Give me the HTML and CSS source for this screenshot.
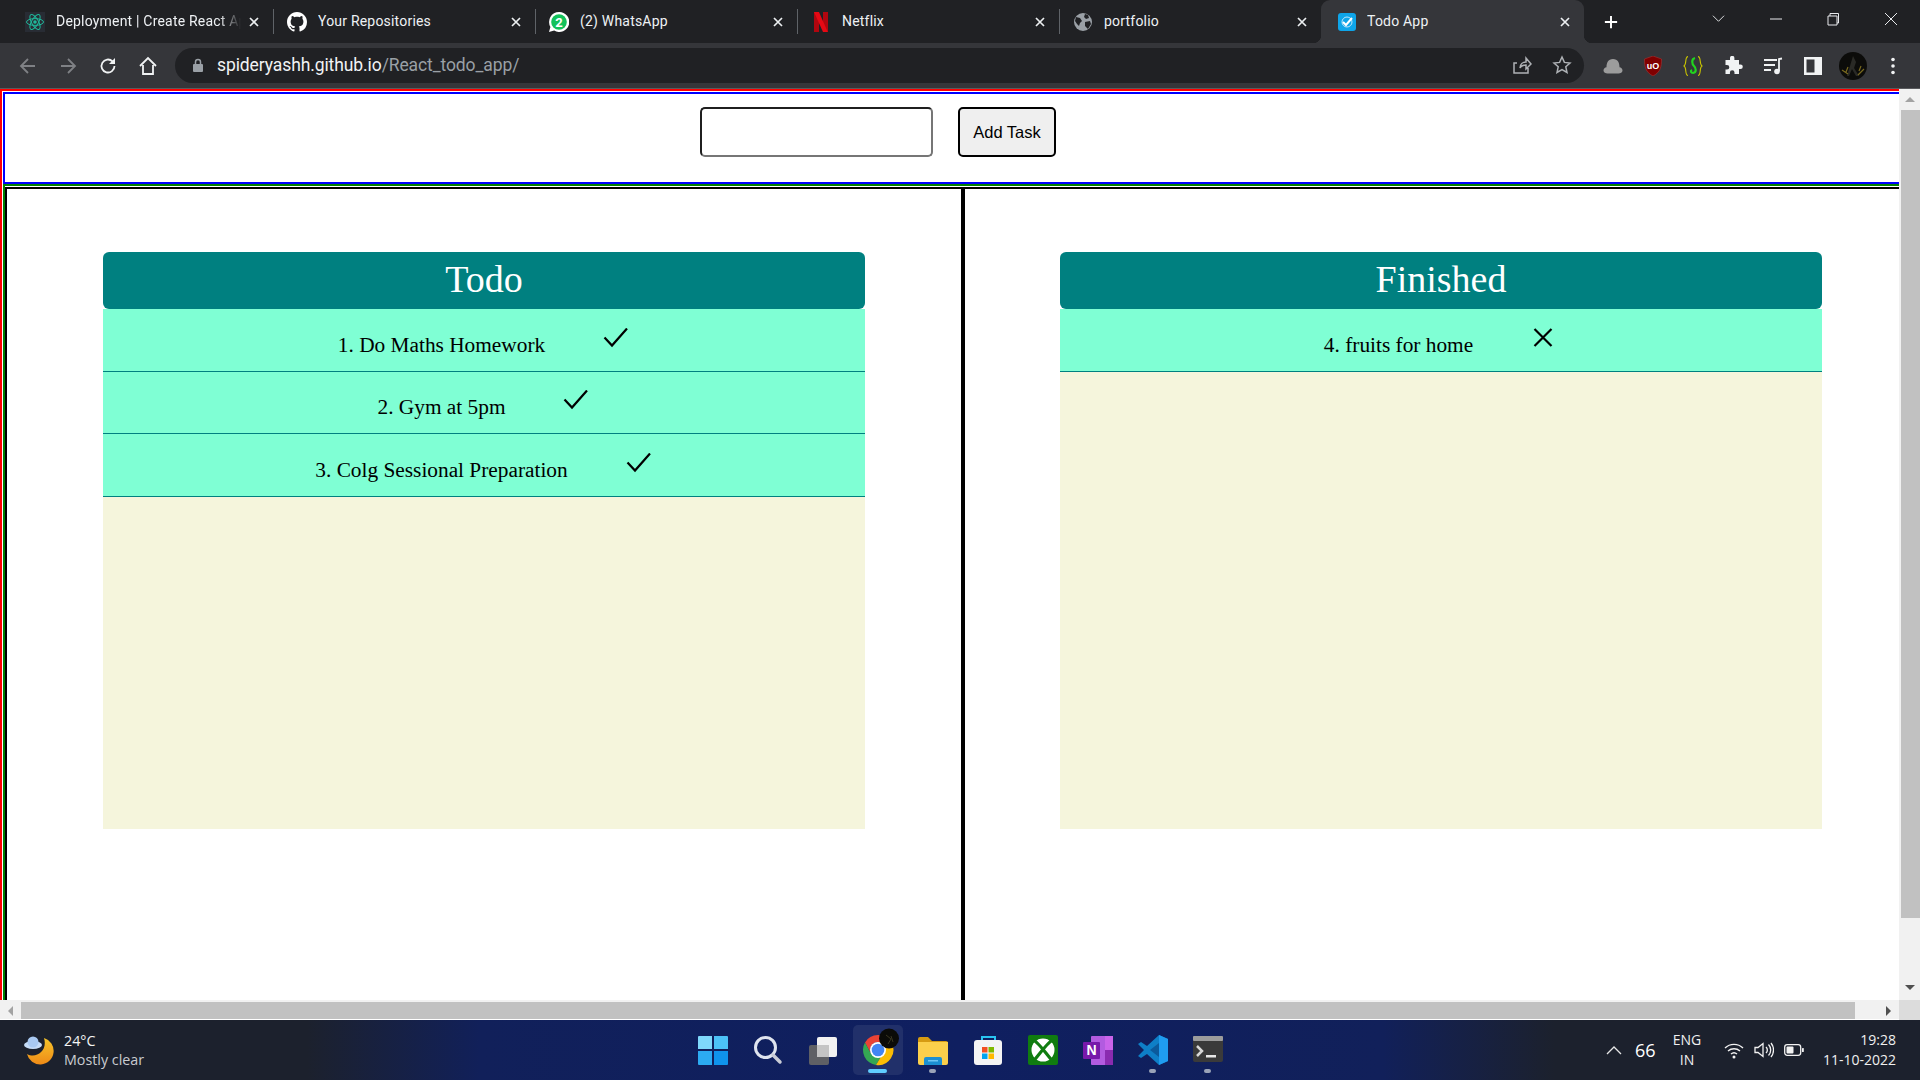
FILE: index.html
```html
<!DOCTYPE html>
<html lang="en">
<head>
<meta charset="utf-8">
<title>Todo App</title>
<link rel="stylesheet" href="styles.css">
</head>
<body>
<div class="window">
  <header class="tabstrip">
    <div class="tab">
      <svg class="favicon" viewBox="0 0 20 20"><rect width="20" height="20" fill="#282c34"/><g fill="none" stroke="#1fb89a" stroke-width="1"><ellipse cx="10" cy="10" rx="8.5" ry="3.4"/><ellipse cx="10" cy="10" rx="8.5" ry="3.4" transform="rotate(60 10 10)"/><ellipse cx="10" cy="10" rx="8.5" ry="3.4" transform="rotate(120 10 10)"/></g><circle cx="10" cy="10" r="1.8" fill="#1fb89a"/></svg>
      <span class="tab-title tab-title-fade">Deployment | Create React App</span>
      <svg class="tab-close" viewBox="0 0 10 10"><path d="M1 1l8 8M9 1l-8 8"/></svg>
    </div>
    <i class="tab-sep"></i>
    <div class="tab">
      <svg class="favicon" viewBox="0 0 16 16"><path fill="#fff" d="M8 0C3.58 0 0 3.58 0 8c0 3.54 2.29 6.53 5.47 7.59.4.07.55-.17.55-.38 0-.19-.01-.82-.01-1.49-2.01.37-2.53-.49-2.69-.94-.09-.23-.48-.94-.82-1.13-.28-.15-.68-.52-.01-.53.63-.01 1.08.58 1.23.82.72 1.21 1.87.87 2.33.66.07-.52.28-.87.51-1.07-1.78-.2-3.64-.89-3.64-3.95 0-.87.31-1.59.82-2.15-.08-.2-.36-1.02.08-2.12 0 0 .67-.21 2.2.82.64-.18 1.32-.27 2-.27.68 0 1.36.09 2 .27 1.53-1.04 2.2-.82 2.2-.82.44 1.1.16 1.92.08 2.12.51.56.82 1.27.82 2.15 0 3.07-1.87 3.75-3.65 3.95.29.25.54.73.54 1.48 0 1.07-.01 1.93-.01 2.2 0 .21.15.46.55.38A8.013 8.013 0 0016 8c0-4.42-3.58-8-8-8z"/></svg>
      <span class="tab-title">Your Repositories</span>
      <svg class="tab-close" viewBox="0 0 10 10"><path d="M1 1l8 8M9 1l-8 8"/></svg>
    </div>
    <i class="tab-sep"></i>
    <div class="tab">
      <svg class="favicon" viewBox="0 0 20 20"><path fill="#fff" d="M10 0a10 10 0 0 0-8.6 15L0 20l5.200-1.400A10 10 0 1 0 10 0z"/><circle cx="10" cy="10" r="7.800" fill="#12c15a"/><text x="10" y="14.500" class="wa-count">2</text></svg>
      <span class="tab-title">(2) WhatsApp</span>
      <svg class="tab-close" viewBox="0 0 10 10"><path d="M1 1l8 8M9 1l-8 8"/></svg>
    </div>
    <i class="tab-sep"></i>
    <div class="tab">
      <svg class="favicon" viewBox="0 0 20 20"><path fill="#b1060f" d="M3 0h5v20l-5 .6zM12 0h5v20.600l-5-.6z"/><path fill="#e50914" d="M3 0h5l9 20.600-5-.6z"/></svg>
      <span class="tab-title">Netflix</span>
      <svg class="tab-close" viewBox="0 0 10 10"><path d="M1 1l8 8M9 1l-8 8"/></svg>
    </div>
    <i class="tab-sep"></i>
    <div class="tab">
      <svg class="favicon" viewBox="0 0 20 20"><circle cx="10" cy="10" r="9" fill="#9aa0a6"/><path fill="#202124" d="M3 5l4 1 2 3-2 2-1 3-2-2-2-3zM12 2l3 1 1 3-3 1-2-2zM12 10l5-1 1 3-3 5-3-3z"/></svg>
      <span class="tab-title">portfolio</span>
      <svg class="tab-close" viewBox="0 0 10 10"><path d="M1 1l8 8M9 1l-8 8"/></svg>
    </div>
    <div class="tab tab-active">
      <svg class="favicon favicon-small" viewBox="0 0 18 18"><rect width="18" height="18" rx="3" fill="#0ea5e9"/><circle cx="9" cy="9" r="5" fill="none" stroke="#bfe6fb" stroke-width="1"/><path d="M5 9l3 3 6-7" fill="none" stroke="#fff" stroke-width="2"/></svg>
      <span class="tab-title">Todo App</span>
      <svg class="tab-close" viewBox="0 0 10 10"><path d="M1 1l8 8M9 1l-8 8"/></svg>
    </div>
    <svg class="new-tab" viewBox="0 0 16 16"><path d="M8 1v14M1 8h14"/></svg>
    <div class="window-controls">
      <svg class="win-icon" viewBox="0 0 14 14"><path d="M1 4l6 6 6-6"/></svg>
      <svg class="win-icon" viewBox="0 0 14 14"><path d="M1 7h12"/></svg>
      <svg class="win-icon" viewBox="0 0 14 14"><path d="M2 4h9v9H2zM4 4V1.500h8.500V11H11"/></svg>
      <svg class="win-icon" viewBox="0 0 14 14"><path d="M1 1l12 12M13 1L1 13"/></svg>
    </div>
  </header>

  <nav class="toolbar">
    <div class="nav-icon"><svg viewBox="0 0 20 20" class="stroke-dim"><path d="M17 10H3.500M10 3l-7 7 7 7"/></svg></div>
    <div class="nav-icon"><svg viewBox="0 0 20 20" class="stroke-dim"><path d="M3 10h13.500M10 3l7 7-7 7"/></svg></div>
    <div class="nav-icon"><svg viewBox="0 0 20 20" class="stroke-light"><path d="M16.500 10a6.500 6.500 0 1 1-2-4.700"/><path class="fill-light" d="M17 2v6h-6z"/></svg></div>
    <div class="nav-icon"><svg viewBox="0 0 20 20" class="stroke-light"><path d="M2 10l8-8 8 8M5 9v9h10V9"/></svg></div>
    <div class="omnibox">
      <svg class="lock" viewBox="0 0 12 14"><path fill="none" stroke="#9aa0a6" stroke-width="1.500" d="M3.500 6V4a2.500 2.500 0 0 1 5 0v2"/><rect x="1" y="6" width="10" height="8" rx="1" fill="#9aa0a6"/></svg>
      <div class="url"><span class="url-host">spideryashh.github.io</span><span class="url-path">/React_todo_app/</span></div>
      <div class="nav-icon"><svg viewBox="0 0 20 20" class="stroke-gray"><path d="M16 13v5H2V8h3M8 13c0-4 3-6 6-6V3l5 6-5 5v-4c-3 0-5 1-6 3z"/></svg></div>
      <div class="nav-icon"><svg viewBox="0 0 20 20" class="stroke-gray"><path d="M10 2l2.400 5.400 5.600.6-4.200 3.800 1.200 5.700-5-2.900-5 2.900 1.200-5.700L2 8l5.600-.6z"/></svg></div>
    </div>
    <div class="extensions">
      <div class="nav-icon"><svg viewBox="0 0 20 20"><path fill="#9c9c9c" d="M.5 14.500c0-2 1.500-3 3-3.200C3.500 7 5 3 10 3s6.500 4 6.500 8.300c1.500.2 3 1.200 3 3.200s-2 3-4 3h-11c-2 0-4-1-4-3z"/></svg></div>
      <div class="nav-icon"><svg viewBox="0 0 20 20"><path fill="#800000" stroke="#a33" stroke-width=".6" d="M10 0l8.500 3c0 8-1 13-8.500 17C2.500 16 1.500 11 1.500 3z"/><text x="10" y="12.500" class="ublock">uO</text></svg></div>
      <div class="nav-icon"><svg viewBox="0 0 20 20"><path fill="none" stroke="#c9c400" stroke-width="1.100" d="M5 .6C1.500.6 4 8.500 1 10c3 1.500.5 9.400 4 9.400M15 .6c3.500 0 1 7.900 4 9.400-3 1.500-.5 9.400-4 9.400"/><path fill="none" stroke="#22d31f" stroke-width="2.200" d="M12 2c-4 1-3 6-1 8 2 2 3 6-1 7-2 0-3-2-1-3"/></svg></div>
      <div class="nav-icon"><svg viewBox="0 0 20 20"><path fill="#f1f3f4" d="M7 2a2.200 2.200 0 0 1 4.400 0V4H16v4.500h1.500a2.300 2.300 0 0 1 0 4.600H16V18h-4.500v-1.500a2.300 2.300 0 0 0-4.600 0V18H2.500v-4.400H4a2.300 2.300 0 0 0 0-4.600H2.500V4H7z"/></svg></div>
      <div class="nav-icon"><svg viewBox="0 0 20 20"><path fill="none" stroke="#f1f3f4" stroke-width="1.800" d="M1 4h13M1 9h11M1 14h7M16 15V3l3-.5"/><circle cx="14" cy="15.500" r="2.800" fill="#f1f3f4"/></svg></div>
      <div class="nav-icon"><svg viewBox="0 0 20 20"><path fill="#f1f3f4" fill-rule="evenodd" d="M1 1h18v18H1zM3.500 3.500v13h8v-13z"/></svg></div>
      <div class="nav-icon"><svg class="avatar" viewBox="0 0 28 28"><circle cx="14" cy="14" r="14" fill="#0c0c0a"/><path d="M14 4l3 6-2 6 5 8h-3l-4-7-3 7H8l3-10z" fill="#2a2a26"/><path d="M3 18l6 4M25 17l-6 6M7 20l2-5M22 14l-2 5" stroke="#7a6a20" stroke-width="1.200" fill="none"/></svg></div>
      <div class="nav-icon"><svg viewBox="0 0 20 20"><circle cx="10" cy="3.500" r="1.800" fill="#f1f3f4"/><circle cx="10" cy="10" r="1.800" fill="#f1f3f4"/><circle cx="10" cy="16.500" r="1.800" fill="#f1f3f4"/></svg></div>
    </div>
  </nav>

  <div class="viewport">
    <main class="page">
      <div class="frame">
        <form class="add-form">
          <input class="task-input" type="text" aria-label="Task">
          <button class="add-button" type="button">Add Task</button>
        </form>
        <div class="board-outer">
          <div class="board">
            <section class="column column-left">
              <div class="card">
                <h1 class="card-head">Todo</h1>
                <ul class="task-list">
                  <li class="task"><span>1. Do Maths Homework</span><svg class="task-icon" viewBox="0 0 30 30"><path d="M4.500 9.500l7.500 8L27 .5"/></svg></li>
                  <li class="task"><span>2. Gym at 5pm</span><svg class="task-icon" viewBox="0 0 30 30"><path d="M4.500 9.500l7.500 8L27 .5"/></svg></li>
                  <li class="task"><span>3. Colg Sessional Preparation</span><svg class="task-icon" viewBox="0 0 30 30"><path d="M4.500 9.500l7.500 8L27 .5"/></svg></li>
                </ul>
              </div>
            </section>
            <section class="column column-right">
              <div class="card">
                <h1 class="card-head">Finished</h1>
                <ul class="task-list">
                  <li class="task"><span>4. fruits for home</span><svg class="task-icon" viewBox="0 0 30 30"><path d="M6.500 1L23.500 18M23.500 1L6.500 18"/></svg></li>
                </ul>
              </div>
            </section>
          </div>
        </div>
      </div>
    </main>
    <aside class="vscroll">
      <div class="scroll-btn"><i class="arrow arrow-up"></i></div>
      <div class="vthumb"></div>
      <div class="scroll-btn scroll-btn-end"><i class="arrow arrow-down"></i></div>
    </aside>
  </div>
  <div class="hscroll">
    <div class="hbtn"><i class="arrow arrow-left"></i></div>
    <div class="hthumb"></div>
    <div class="hbtn hbtn-end"><i class="arrow arrow-right"></i></div>
    <div class="corner"></div>
  </div>

  <footer class="taskbar">
    <div class="weather">
      <svg class="weather-icon" viewBox="0 0 30 30"><defs><linearGradient id="moon" x1="0" y1="0" x2="0" y2="1"><stop offset="0" stop-color="#f7c52a"/><stop offset="1" stop-color="#ee8a17"/></linearGradient></defs><path d="M20 3A13.500 13.500 0 1 1 3 19C12 24 24 16 20 3z" fill="url(#moon)"/><ellipse cx="9" cy="10" rx="9" ry="4" fill="#c6dcf7"/><circle cx="9" cy="7" r="5.500" fill="#a9c9f2"/></svg>
      <div class="weather-text"><span class="temp">24°C</span><span class="cond">Mostly clear</span></div>
    </div>
    <div class="task-apps">
      <div class="app"><svg viewBox="0 0 30 30"><g fill="#2bb4f5"><path d="M1 1h13v13H0V2a1 1 0 0 1 1-1z" fill="#7fd8fb"/><path d="M16 1h13a1 1 0 0 1 1 1v12H16z" fill="#4cc2f8"/><path d="M0 16h14v14H1a1 1 0 0 1-1-1z" fill="#2cabf2"/><path d="M16 16h14v13a1 1 0 0 1-1 1H16z" fill="#0f93ec"/></g></svg></div>
      <div class="app"><svg viewBox="0 0 30 30"><circle cx="12.500" cy="12.500" r="10" fill="none" stroke="#dfe4ef" stroke-width="3"/><path d="M20 20l7 7" stroke="#c9ccd6" stroke-width="3.500" stroke-linecap="round"/></svg></div>
      <div class="app"><svg viewBox="0 0 30 30"><rect x="9" y="2" width="20" height="20" rx="2" fill="#f2f2f2"/><rect x="1" y="10" width="20" height="20" rx="2" fill="#666" fill-opacity=".92"/><rect x="9" y="10" width="12" height="12" fill="#c4c4c4"/></svg></div>
      <div class="app app-active"><svg class="chrome" viewBox="0 0 32 32"><path d="M16 1A15 15 0 0 0 3 8.500L9.100 20A8 8 0 0 1 16 8H29A15 15 0 0 0 16 1z" fill="#ea4335"/><path d="M3 8.500A15 15 0 0 0 14 30.900L20 20.900A8 8 0 0 1 9.100 20z" fill="#34a853"/><path d="M29 8H16A8 8 0 0 1 20 20.900L14 30.900A15 15 0 0 0 29 8z" fill="#fbbc04"/><circle cx="16" cy="16" r="8" fill="#fff"/><circle cx="16" cy="16" r="6.300" fill="#4285f4"/><circle cx="27" cy="4.500" r="10" fill="#0b0b08"/><path d="M24 1l5 4-3 5M29 2l2 6" stroke="#3a3722" fill="none"/></svg><i class="dot dot-active"></i></div>
      <div class="app"><svg viewBox="0 0 30 30"><path d="M0 4a2 2 0 0 1 2-2h8l4 4h14a2 2 0 0 1 2 2v4H0z" fill="#d69b12"/><path d="M0 7h30v21a2 2 0 0 1-2 2H2a2 2 0 0 1-2-2z" fill="#fbcf4b"/><path d="M6 24a2 2 0 0 1 2-2h14a2 2 0 0 1 2 2v6H6z" fill="#1b8fd2"/><rect x="10" y="25" width="10" height="1.500" fill="#6cc6f3"/></svg><i class="dot"></i></div>
      <div class="app"><svg viewBox="0 0 30 30"><path d="M9 7V2h13v5" fill="none" stroke="#29c4f2" stroke-width="2"/><rect x="1" y="5" width="28" height="25" rx="3" fill="#f4f4f4"/><rect x="9" y="12" width="5.500" height="5.500" fill="#f25022"/><rect x="15.500" y="12" width="5.500" height="5.500" fill="#7fba00"/><rect x="9" y="18.500" width="5.500" height="5.500" fill="#00a4ef"/><rect x="15.500" y="18.500" width="5.500" height="5.500" fill="#ffb900"/></svg></div>
      <div class="app"><svg viewBox="0 0 30 30"><rect width="30" height="30" rx="2" fill="#107c10"/><circle cx="15" cy="15" r="11.500" fill="#fff"/><path d="M5.500 5C12 9 18 19 24.500 26M24.500 5C18 9 12 19 5.500 26" fill="none" stroke="#107c10" stroke-width="3.200"/></svg></div>
      <div class="app"><svg viewBox="0 0 30 30"><rect x="8" y="1" width="22" height="29" rx="1" fill="#b25be0"/><rect x="22" y="1" width="8" height="14" fill="#ca64ea"/><rect x="22" y="15" width="8" height="15" fill="#8a2bb0"/><rect y="7" width="17" height="17" rx="1" fill="#7719aa"/><text x="8.500" y="20" class="onenote">N</text></svg></div>
      <div class="app"><svg viewBox="0 0 30 30"><path d="M21 0l9 4v22l-9 4-12-11-6 4-3-2 6-6-6-6 3-2 6 4z" fill="#0e7fc7"/><path d="M21 0l9 4v22l-9 4z" fill="#1f9cf0"/><path d="M21 8l-9 7 9 7z" fill="#0b5a9c"/></svg><i class="dot"></i></div>
      <div class="app"><svg viewBox="0 0 30 30"><rect y="1" width="30" height="26" rx="2" fill="#3a3a3a"/><rect y="1" width="30" height="5" rx="1" fill="#9c9c9c"/><path d="M4 11l5 5-5 5" fill="none" stroke="#d8d8d8" stroke-width="2.500"/><rect x="13" y="20" width="10" height="2.500" fill="#e8e8e8"/></svg><i class="dot"></i></div>
    </div>
    <div class="tray">
      <svg class="tray-icon" viewBox="0 0 20 20"><path d="M3 14l7-7 7 7" fill="none" stroke="#e6e6e6" stroke-width="1.300"/></svg>
      <span class="tray-num">66</span>
      <div class="lang"><span>ENG</span><span>IN</span></div>
      <svg class="tray-icon tray-wifi" viewBox="0 0 20 20"><path d="M1 8a13 13 0 0 1 18 0M4 11a9 9 0 0 1 12 0M7 14a4.500 4.500 0 0 1 6 0" fill="none" stroke="#f2f2f2" stroke-width="1.400"/><circle cx="10" cy="17" r="1.500" fill="#f2f2f2"/></svg>
      <svg class="tray-icon" viewBox="0 0 20 20"><path d="M1 7.500h3L9 3.500v13L4 12.500H1z" fill="none" stroke="#f2f2f2" stroke-width="1.300"/><path d="M12 7a4 4 0 0 1 0 6M14.500 4.500a8 8 0 0 1 0 11M17 3a11 11 0 0 1 0 14" fill="none" stroke="#f2f2f2" stroke-width="1.300"/></svg>
      <svg class="tray-icon" viewBox="0 0 20 20"><rect x=".7" y="4.700" width="16" height="10.600" rx="2.500" fill="none" stroke="#f2f2f2" stroke-width="1.300"/><rect x="2.500" y="6.500" width="7" height="7" rx="1" fill="#f2f2f2"/><rect x="18" y="8" width="1.800" height="4" rx=".6" fill="#f2f2f2"/></svg>
      <div class="clock"><span>19:28</span><span>11-10-2022</span></div>
    </div>
  </footer>
</div>
</body>
</html>
```
FILE: styles.css
```css
* { box-sizing: border-box; }
html, body { margin: 0; padding: 0; height: 100%; overflow: hidden; background: #fff; }
.window { width: 1920px; height: 1080px; display: flex; flex-direction: column; overflow: hidden; font-family: "Roboto", "Liberation Sans", sans-serif; }

/* Browser tab strip */
.tabstrip { height: 43px; flex: none; background: #202124; display: flex; align-items: stretch; padding-left: 12px; }
.tab { width: 261px; flex: none; display: flex; align-items: center; padding: 0 13px 0 13px; color: #e8eaed; position: relative; }
.tab-sep { width: 1px; height: 25px; align-self: center; margin-top: -1px; background: #5f6368; flex: none; }
.favicon { width: 20px; height: 20px; flex: none; }
.favicon-small { width: 18px; height: 18px; margin-left: 3px; }
.tab-title { flex: 1; min-width: 0; margin-left: 11px; margin-bottom: 2px; font-size: 14px; letter-spacing: .2px; white-space: nowrap; overflow: hidden; color: #eef1f4; }
.tab-title-fade { -webkit-mask-image: linear-gradient(90deg, #000 88%, transparent 100%); mask-image: linear-gradient(90deg, #000 88%, transparent 100%); }
.tab-close { width: 10px; height: 10px; flex: none; margin-left: 8px; margin-right: 1px; }
.tab-close path { stroke: #eceff1; stroke-width: 1.700; fill: none; }
.tab-active { width: 263px; margin-left: 0; background: #35363a; border-radius: 9px 9px 0 0; padding-left: 14px; }
.tab-active::before, .tab-active::after { content: ""; position: absolute; bottom: 0; width: 8px; height: 8px; }
.tab-active::before { left: -8px; background: radial-gradient(circle at 0 0, transparent 8px, #35363a 8.500px); }
.tab-active::after { right: -8px; background: radial-gradient(circle at 100% 0, transparent 8px, #35363a 8.500px); }
.new-tab { width: 14px; height: 14px; align-self: center; margin-left: 20px; flex: none; }
.new-tab path { stroke: #fff; stroke-width: 2.200; fill: none; }
.window-controls { display: flex; margin-left: 94px; padding-top: 12px; gap: 43.500px; align-items: flex-start; }
.win-icon { width: 14px; height: 14px; flex: none; }
.win-icon path { stroke: #e8eaed; stroke-width: 1; fill: none; }
.win-icon:first-child { width: 13px; height: 13px; }

/* Browser toolbar */
.toolbar { height: 46px; flex: none; background: #35363a; border-bottom: 1px solid #5a5b5e; display: flex; align-items: center; padding-left: 8px; }
.nav-icon { width: 40px; height: 35px; flex: none; display: flex; align-items: center; justify-content: center; }
.nav-icon svg { width: 20px; height: 20px; }
.nav-icon svg.avatar { width: 28px; height: 28px; }
.stroke-dim path { fill: none; stroke: #7f8185; stroke-width: 1.800; }
.stroke-light path { fill: none; stroke: #f1f3f4; stroke-width: 1.800; }
.stroke-light path.fill-light { fill: #f1f3f4; stroke: none; }
.stroke-gray path { fill: none; stroke: #aeb1b5; stroke-width: 1.500; }
.omnibox { width: 1409px; height: 35px; margin-left: 7px; border-radius: 18px; background: #202124; display: flex; align-items: center; padding: 0 2px 0 17px; flex: none; margin-bottom: 1px; }
.lock { width: 12px; height: 14px; flex: none; }
.url { flex: 1; margin-left: 13px; font-size: 17.500px; white-space: nowrap; letter-spacing: -.1px; }
.url-host { color: #f1f3f4; }
.url-path { color: #9aa0a6; }
.extensions { display: flex; margin-left: 9px; }

/* Page viewport */
.viewport { height: 911px; flex: none; display: flex; }
.page { width: 1899px; height: 911px; overflow: hidden; background: #fff; flex: none; }
.frame { width: 1960px; height: 920px; border-top: 2px solid #f00; border-left: 2px solid #f00; padding: 1px 0 0 1px; }
.add-form { height: 92px; border-top: 2px solid #00f; border-left: 2px solid #00f; border-bottom: 2px solid #00f; padding: 13px 0 0 695px; display: flex; gap: 25px; align-items: flex-start; }
.task-input { width: 233px; height: 50px; border: 2px solid; border-color: #1f1f1f #767676 #767676 #1f1f1f; border-radius: 5px; background: #fff; padding: 0; }
.add-button { width: 98px; height: 50px; border: 2px solid #000; border-radius: 5px; background: #efefef; color: #000; font: 16.500px "Liberation Sans", Arial, sans-serif; padding: 0; }
.board-outer { border-top: 2px solid #008000; border-left: 2px solid #008000; padding-top: 1px; }
.board { border-top: 2px solid #000; border-left: 2px solid #000; display: flex; height: 830px; }
.column { width: 956px; flex: none; padding: 63px 96px 0 96px; }
.column-left { border-right: 2px solid #000; }
.column-right { border-left: 2px solid #000; width: 956px; padding-left: 95px; padding-right: 97px; }
.card { width: 762px; height: 577px; display: flex; flex-direction: column; font-family: "Liberation Serif", "Times New Roman", serif; }
.card-head { margin: 0; height: 57px; flex: none; background: #008080; border-radius: 6px; color: #fff; font-size: 38px; font-weight: 400; line-height: 43px; padding-top: 6px; text-align: center; }
.task-list { margin: 0; padding: 0; list-style: none; flex: 1; background: #f5f5dc; }
.task { height: 62.500px; background: #7fffd4; border-bottom: 1px solid #008080; display: flex; justify-content: center; align-items: flex-start; gap: 55px; padding-top: 23.500px; font-size: 21.330px; line-height: 25px; color: #000; }
.task-icon { width: 30px; height: 30px; flex: none; margin-top: -5px; }
.task-icon path { fill: none; stroke: #000; stroke-width: 2.200; }

/* Scrollbars */
.vscroll { width: 21px; flex: none; background: #f1f1f1; display: flex; flex-direction: column; align-items: flex-end; }
.scroll-btn { width: 21px; height: 21px; flex: none; display: flex; align-items: center; justify-content: center; }
.vthumb { width: 19px; height: 808px; background: #c1c1c1; flex: none; }
.scroll-btn-end { margin-top: auto; padding-bottom: 4px; }
.hscroll { height: 20px; flex: none; background: #f1f1f1; display: flex; padding: 2px 0 1px; box-shadow: inset 0 -1px 0 #fff; }
.hbtn { width: 21px; flex: none; display: flex; align-items: center; justify-content: center; }
.hthumb { width: 1834px; background: #c1c1c1; flex: none; }
.hbtn-end { width: 44px; padding-left: 22px; }
.corner { width: 21px; flex: none; background: #dcdcdc; margin: -2px 0 -1px; }
.arrow { display: block; width: 0; height: 0; border-style: solid; border-color: transparent; }
.arrow-up { border-width: 0 5px 5px; border-bottom-color: #a3a3a3; }
.arrow-down { border-width: 5px 5px 0; border-top-color: #505050; }
.arrow-left { border-width: 5px 5px 5px 0; border-right-color: #a3a3a3; }
.arrow-right { border-width: 5px 0 5px 5px; border-left-color: #505050; }

/* Taskbar */
.taskbar { height: 60px; flex: none; display: grid; grid-template-columns: 1fr auto 1fr; align-items: center; background: linear-gradient(90deg, #1c212d 0, #1c212d 16%, #11205a 25%, #0f1f60 50%, #11205a 72%, #1c212d 81%, #1c212d 100%); color: #fff; font-family: "Open Sans", "Noto Sans", sans-serif; }
.weather { display: flex; align-items: center; padding-left: 24px; }
.weather-icon { width: 30px; height: 30px; flex: none; }
.weather-text { display: flex; flex-direction: column; margin-left: 10px; font-size: 14.300px; line-height: 19.500px; }
.temp { color: #f5f5f5; }
.cond { color: #c9cbd0; }
.task-apps { display: flex; gap: 5px; }
.app { width: 50px; height: 50px; flex: none; display: flex; align-items: center; justify-content: center; border-radius: 5px; position: relative; }
.app svg { width: 30px; height: 30px; }
.app-active { background: #21306a; }
.app svg.chrome { width: 32px; height: 32px; overflow: visible; }
.dot { position: absolute; left: 21.500px; bottom: 2px; width: 7px; height: 4px; border-radius: 2px; background: #9aa3b8; }
.dot-active { left: 15.500px; width: 19px; background: #60cdff; }
.tray { display: flex; justify-content: flex-end; align-items: center; padding-right: 24px; }
.tray-icon { width: 20px; height: 20px; flex: none; margin-left: 10px; }
.tray-wifi { margin-left: 20px; }
.tray-num { width: 20px; margin-left: 11px; margin-right: -1px; font-size: 18px; text-align: center; color: #fff; }
.lang { width: 34px; margin-left: 16px; display: flex; flex-direction: column; align-items: center; font-size: 14px; line-height: 20px; color: #f0f0f0; }
.clock { width: 72px; margin-left: 20px; display: flex; flex-direction: column; align-items: flex-end; font-size: 14px; line-height: 20px; color: #f0f0f0; white-space: nowrap; }

/* SVG text */
.wa-count { font: 700 13px "Roboto", sans-serif; fill: #fff; text-anchor: middle; }
.ublock { font: 700 9px "Liberation Sans", sans-serif; fill: #fff; text-anchor: middle; }
.onenote { font: 700 14px "Liberation Sans", sans-serif; fill: #fff; text-anchor: middle; }
```
